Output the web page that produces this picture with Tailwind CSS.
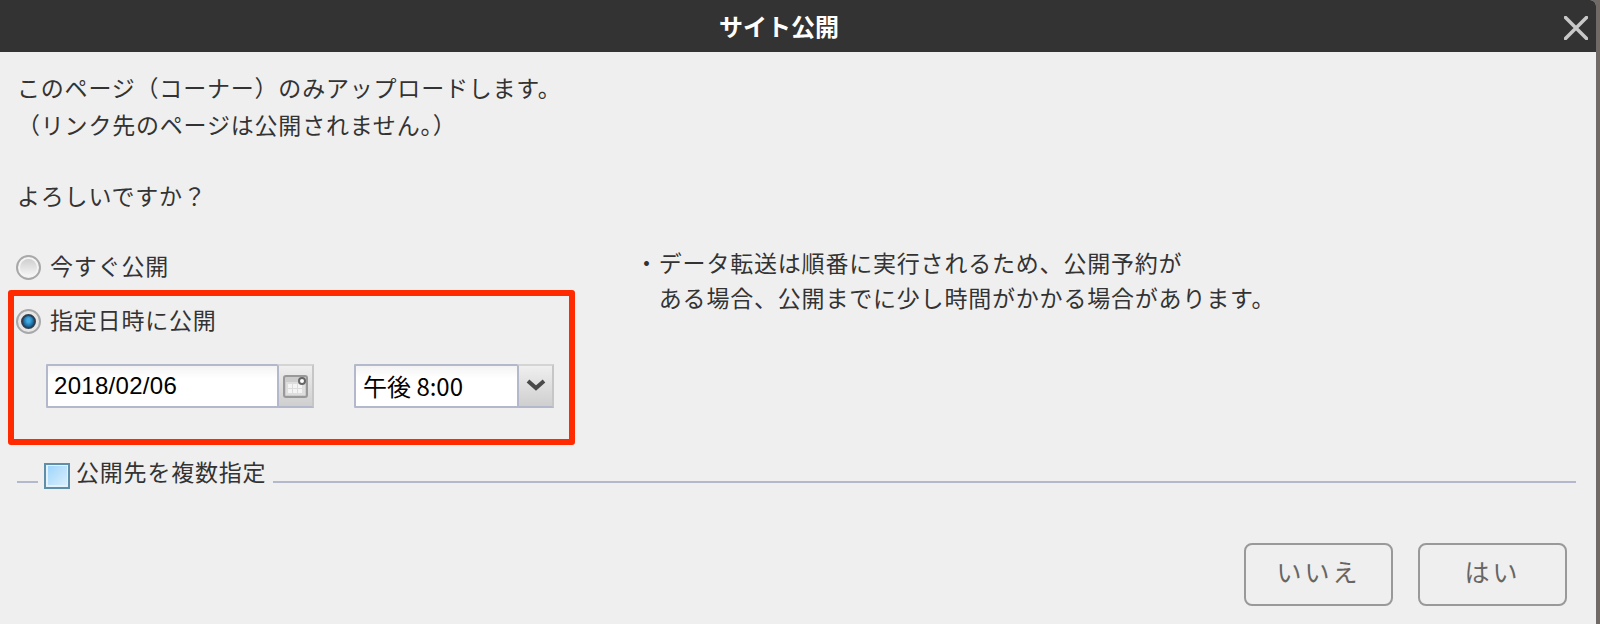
<!DOCTYPE html>
<html lang="ja">
<head>
<meta charset="utf-8">
<script src="https://cdn.jsdelivr.net/npm/@tailwindcss/browser@4"></script>
</head>
<body class="bg-[#6f6a66] overflow-hidden">
<div class="w-[1596px] h-[624px] bg-[#efefef] rounded-tr-md flex flex-col text-[#333] text-[23px] tracking-[0.8px] font-['Noto_Sans_CJK_JP','Noto_Sans',sans-serif]">
  <header class="h-[52px] shrink-0 bg-[#333333] rounded-tr-md flex items-center justify-center relative pr-[38px]">
    <h1 class="text-white font-bold text-[24px] tracking-normal">サイト公開</h1>
    <svg class="absolute right-[8px] top-[16px] w-[24px] h-[24px]" viewBox="0 0 24 24" fill="none" stroke="#c8c8c8" stroke-width="3.5" stroke-linecap="round"><path d="M1.5 1.5 22.5 22.5M22.5 1.5 1.5 22.5"/></svg>
  </header>
  <div class="flex-1 flex flex-col pl-[18px] pr-[20px]">
    <div class="pt-[17px] leading-[37px]">
      <p class="-ml-[1px]">このページ（コーナー）のみアップロードします。</p>
      <p class="-ml-[1px]">（リンク先のページは公開されません。）</p>
      <p class="mt-[34px] -ml-[1px]">よろしいですか？</p>
    </div>
    <div class="flex mt-[36px]">
      <div class="w-[617px] shrink-0">
        <label class="flex items-center h-[35px] -ml-[2px]">
          <span class="w-[25px] h-[25px] rounded-full border-[2px] border-[#a8a8a8] bg-[#f4f4f4] flex items-center justify-center"><span class="w-[17px] h-[17px] rounded-full bg-gradient-to-b from-[#cfcfcf] to-[#f6f6f6]"></span></span>
          <span class="ml-[9px] -mt-[5px]">今すぐ公開</span>
        </label>
        <div class="-ml-[10px] mt-[5px] w-[567px] h-[155px] border-[6px] border-[#ff2a00] rounded-[3px] pl-[2px]">
          <label class="flex items-center h-[35px] mt-[8px]">
            <span class="w-[25px] h-[25px] rounded-full border-[2px] border-[#a8a8a8] bg-[#e6e6e6] flex items-center justify-center"><span class="w-[15px] h-[15px] rounded-full bg-radial-[at_50%_40%] from-[#3fa9e4] from-20% to-[#0a3f6c] to-90% border-2 border-[#2f3f50]"></span></span>
            <span class="ml-[9px] -mt-[5px]">指定日時に公開</span>
          </label>
          <div class="flex mt-[25px] ml-[30px] text-black text-[24px] tracking-normal">
            <div class="flex h-[44px] w-[268px] border-2 border-[#b4b8cc] rounded-[1px]">
              <span class="flex-1 flex items-center pl-[6px] bg-gradient-to-b from-[#f3f3f3] to-white to-[30%] font-['Liberation_Sans'] tracking-[0.3px]">2018/02/06</span>
              <span class="w-[37px] -my-[2px] -mr-[2px] border-2 border-t-[#d4d4d4] border-r-[#c6c6c6] border-l-[#b4b8cc] border-b-[#b4b8cc] bg-gradient-to-b from-[#efefef] to-[#cfcfcf] flex items-center justify-center">
                <svg class="w-[25px] h-[25px]" viewBox="0 0 25 25" fill="none"><rect x="1" y="2" width="23" height="21" rx="2" fill="#cccccc" stroke="#999999" stroke-width="2"/><path d="M3 8h15V6h4v15H3z" fill="#dedede"/><path d="M5 10h14v9H5z" fill="#f4f4f4"/><path d="M9.500 10v9M14.500 10v9M5 14.500h14" stroke="#dcdcdc"/><circle cx="19" cy="7" r="3" fill="#fff" stroke="#666" stroke-width="2"/></svg>
              </span>
            </div>
            <div class="flex h-[44px] w-[200px] ml-[40px] border-2 border-[#b4b8cc] rounded-[1px]">
              <span class="flex-1 flex items-center pl-[7px] bg-gradient-to-b from-[#f3f3f3] to-white to-[30%]">午後 8:00</span>
              <span class="w-[37px] -my-[2px] -mr-[2px] border-2 border-t-[#d4d4d4] border-r-[#c6c6c6] border-l-[#b4b8cc] border-b-[#b4b8cc] bg-gradient-to-b from-[#efefef] to-[#cfcfcf] flex items-center justify-center">
                <svg class="w-[20px] h-[12px] -mt-[2px]" viewBox="0 0 20 12" fill="none" stroke="#4a4a4a" stroke-width="4"><path d="M2 2l8 7 8-7"/></svg>
              </span>
            </div>
          </div>
        </div>
      </div>
      <div class="-mt-[5px] leading-[35px] whitespace-pre">・データ転送は順番に実行されるため、公開予約が
　ある場合、公開までに少し時間がかかる場合があります。</div>
    </div>
    <div class="flex items-center mt-[13px] h-[35px] -ml-[1px]">
      <span class="w-[21px] h-[2px] bg-[#b4b8cc] mt-[12px]"></span>
      <span class="ml-[6px] w-[26px] h-[26px] border-2 border-[#5f8fa8] bg-[#e4f2fb] flex items-center justify-center"><span class="w-[19px] h-[19px] bg-gradient-to-br from-[#9fd5fb] to-[#d8eefc]"></span></span>
      <span class="ml-[6px] -mt-[9px]">公開先を複数指定</span>
      <span class="ml-[7px] flex-1 h-[2px] bg-[#b4b8cc] mt-[12px]"></span>
    </div>
    <div class="flex justify-end gap-[25px] mt-[50px] mr-[9px] text-[#666] text-[25px]">
      <button class="w-[149px] h-[63px] pb-[5px] border-2 border-[#999] rounded-[8px] tracking-[3px]">いいえ</button>
      <button class="w-[149px] h-[63px] pb-[5px] border-2 border-[#999] rounded-[8px] tracking-[3px]">はい</button>
    </div>
  </div>
</div>
</body>
</html>
